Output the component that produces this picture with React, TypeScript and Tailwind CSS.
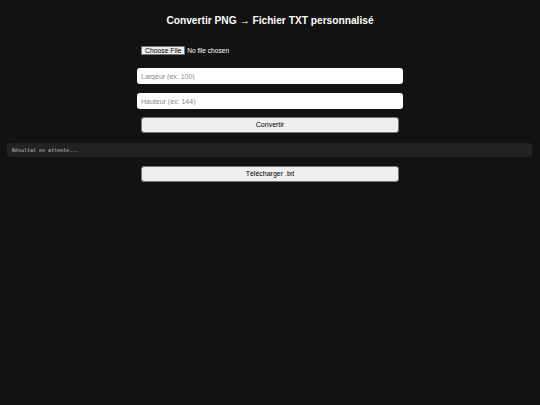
export default function App() {
  return (
    <div className="min-h-screen bg-[#121212] font-['Liberation_Sans',Arial,sans-serif] pt-[14px]">
      <h1 className="text-center text-[10.2px] leading-[13px] font-bold text-white">
        Convertir PNG → Fichier TXT personnalisé
      </h1>

      <div className="w-[266px] mx-auto">
        <div className="flex items-center gap-[2px] pl-[4px] mt-[19px] h-[9px]">
          <span className="h-[9px] px-[3px] bg-[#efefef] border border-[#767676] rounded-[1px] text-[6.8px] leading-[7px] text-black flex items-center">
            Choose File
          </span>
          <span className="text-[6.6px] leading-[9px] text-white">No file chosen</span>
        </div>

        <input
          className="block w-full h-[16px] mt-[13px] bg-white rounded-[3px] px-[4px] text-[7px] text-black placeholder:text-[#8a8a8a] outline-none"
          placeholder="Largeur (ex: 100)"
        />
        <input
          className="block w-full h-[16px] mt-[9px] bg-white rounded-[3px] px-[4px] text-[7px] text-black placeholder:text-[#8a8a8a] outline-none"
          placeholder="Hauteur (ex: 144)"
        />
        <button className="block w-[258px] mx-auto h-[16px] mt-[8px] bg-[#efefef] border border-[#767676] rounded-[3px] text-[7px] text-black">
          Convertir
        </button>
      </div>

      <pre className="mx-[7px] w-[525px] h-[14px] mt-[10px] bg-[#222222] rounded-[3px] px-[5px] text-[5px] leading-[14px] text-[#cccccc] font-['DejaVu_Sans_Mono',monospace]">
        Résultat en attente...
      </pre>

      <button className="block w-[258px] mx-auto h-[16px] mt-[9px] bg-[#efefef] border border-[#767676] rounded-[3px] text-[7px] text-black">
        Télécharger .txt
      </button>
    </div>
  );
}
